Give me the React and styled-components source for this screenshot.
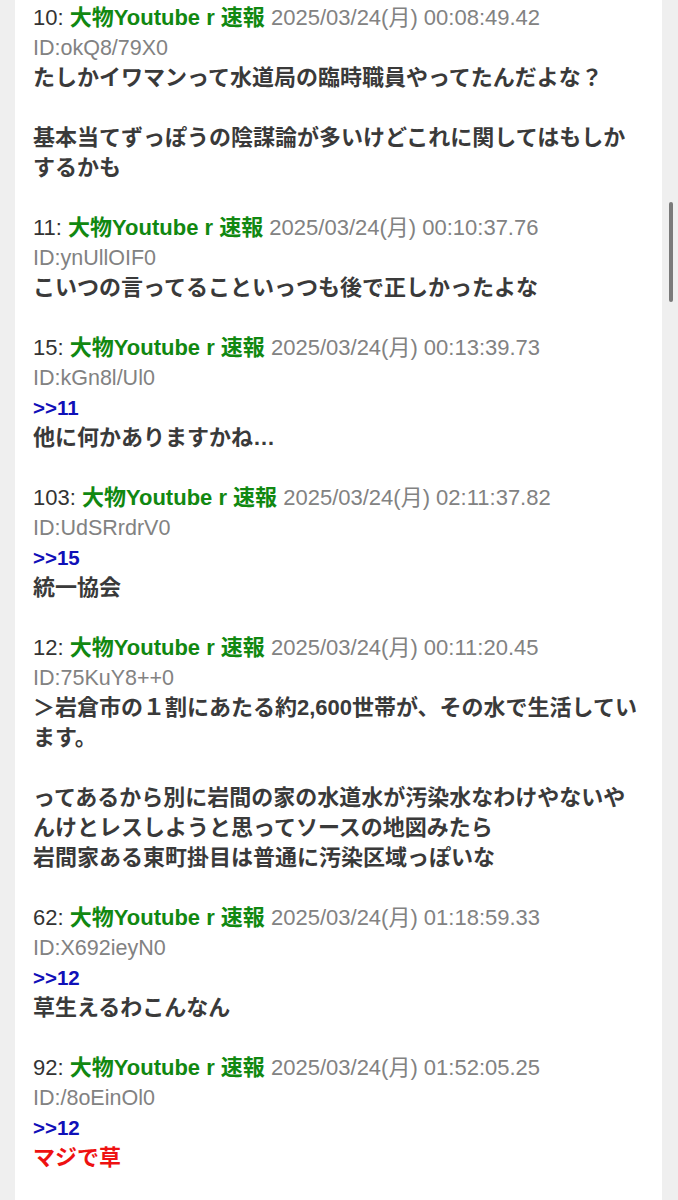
import React from 'react';
import styled, { createGlobalStyle } from 'styled-components';

const GlobalStyle = createGlobalStyle`
  html, body {
    margin: 0;
    padding: 0;
    background: #efefef;
  }
`;

const Page = styled.div`
  display: flex;
  min-height: 1200px;
  font-family: "Liberation Sans", "Noto Sans CJK JP", sans-serif;
`;

const Gutter = styled.div`
  width: ${(p) => p.w}px;
  flex-shrink: 0;
  background: #efefef;
  position: relative;
`;

const ScrollThumb = styled.div`
  position: absolute;
  left: 7px;
  top: 202px;
  width: 4px;
  height: 100px;
  border-radius: 2px;
  background: #7a7a7a;
`;

const Thread = styled.div`
  flex: 1;
  background: #fff;
  padding: 3px 20px 0 18px;
  display: flex;
  flex-direction: column;
  gap: 30px;
`;

const Post = styled.div`
  display: flex;
  flex-direction: column;
`;

const Header = styled.div`
  font-size: 22px;
  line-height: 30px;
  color: #333;
  white-space: nowrap;
`;

const Name = styled.span`
  color: #118811;
  font-weight: bold;
`;

const Stamp = styled.span`
  color: #828282;
`;

const Id = styled.div`
  font-size: 21.5px;
  line-height: 30px;
  color: #828282;
`;

const Anchor = styled.div`
  font-size: 20.5px;
  line-height: 30px;
  color: #1010b8;
  font-weight: bold;
`;

const Body = styled.div`
  font-size: 22px;
  line-height: 30px;
  font-weight: bold;
  color: ${(p) => (p.red ? '#ee1111' : '#3a3a3a')};
  white-space: pre-line;
  line-break: strict;
`;

const posts = [
  { no: 10, date: '2025/03/24(月) 00:08:49.42', id: 'okQ8/79X0', text: 'たしかイワマンって水道局の臨時職員やってたんだよな？\n\n基本当てずっぽうの陰謀論が多いけどこれに関してはもしかするかも' },
  { no: 11, date: '2025/03/24(月) 00:10:37.76', id: 'ynUllOIF0', text: 'こいつの言ってることいっつも後で正しかったよな' },
  { no: 15, date: '2025/03/24(月) 00:13:39.73', id: 'kGn8l/Ul0', anchor: 11, text: '他に何かありますかね…' },
  { no: 103, date: '2025/03/24(月) 02:11:37.82', id: 'UdSRrdrV0', anchor: 15, text: '統一協会' },
  { no: 12, date: '2025/03/24(月) 00:11:20.45', id: '75KuY8++0', text: '＞岩倉市の１割にあたる約2,600世帯が、その水で生活しています。\n\nってあるから別に岩間の家の水道水が汚染水なわけやないやんけとレスしようと思ってソースの地図みたら\n岩間家ある東町掛目は普通に汚染区域っぽいな' },
  { no: 62, date: '2025/03/24(月) 01:18:59.33', id: 'X692ieyN0', anchor: 12, text: '草生えるわこんなん' },
  { no: 92, date: '2025/03/24(月) 01:52:05.25', id: '/8oEinOl0', anchor: 12, text: 'マジで草', red: true },
];

export default function App() {
  return (
    <>
      <GlobalStyle />
      <Page>
        <Gutter w={15} />
        <Thread>
          {posts.map((p) => (
            <Post key={p.no}>
              <Header>
                {p.no}: <Name>大物Youtube r 速報</Name> <Stamp>{p.date}</Stamp>
              </Header>
              <Id>ID:{p.id}</Id>
              {p.anchor && <Anchor>&gt;&gt;{p.anchor}</Anchor>}
              <Body red={p.red}>{p.text}</Body>
            </Post>
          ))}
        </Thread>
        <Gutter w={16}>
          <ScrollThumb />
        </Gutter>
      </Page>
    </>
  );
}
